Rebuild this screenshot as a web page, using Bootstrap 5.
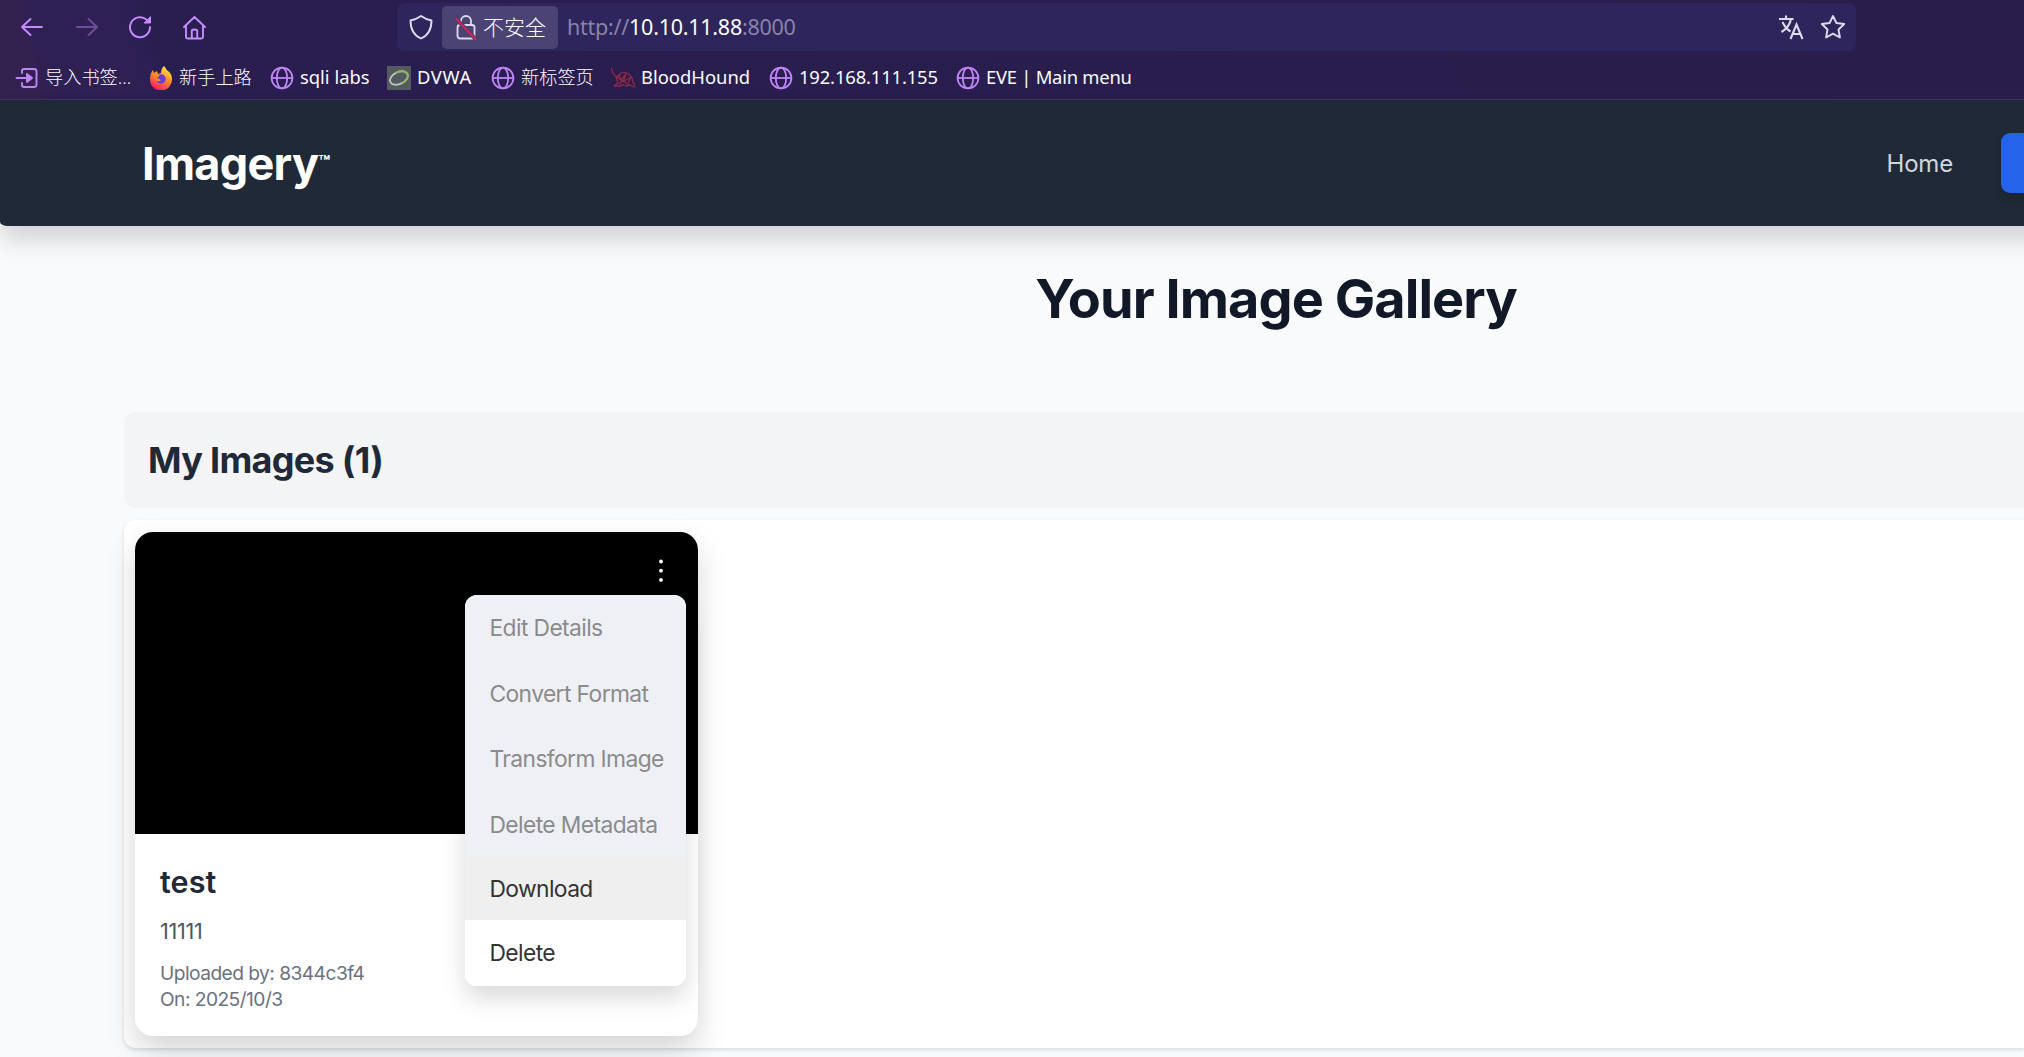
<!DOCTYPE html>
<html lang="zh-CN">
<head>
<meta charset="utf-8">
<meta name="viewport" content="width=device-width, initial-scale=1">
<title>Imagery</title>
<link href="https://cdn.jsdelivr.net/npm/bootstrap@5.3.0/dist/css/bootstrap.min.css" rel="stylesheet">
<style>
body{font-family:Inter,"Noto Sans CJK SC",sans-serif;background:#f9fafc;width:2024px;height:1057px;overflow:hidden}
svg{flex:none;display:block}
.chrome{height:100px;background:linear-gradient(75deg,#33214f 0,#33214f 35px,#2f2054 55px,#2e2055 140px,#2a1e50 165px,#291d4c 100%);border-bottom:1px solid #3b3068;font-family:"Noto Sans","Noto Sans CJK SC",sans-serif;color:#fbfbfe}
.toolbar{height:54px;padding-left:20px}
.tool-icons{width:377px;gap:28.500px}
.address{width:1459px;height:48px;border-radius:7px;background:#2d255b;padding:0 10px 0 12px}
.insecure{width:116px;height:43px;border-radius:5px;background:#4c4375;margin-left:9px;padding-left:13px;font-size:21px;font-weight:300;gap:6px;line-height:1}
.web-url{margin-left:9px;font-size:21.5px;color:#8b83a9;letter-spacing:-.25px}
.web-url b{font-weight:400;color:#fbfbfe}
.bookmarks{height:45px;padding:2px 0 0 15px;font-size:18.4px;line-height:1;white-space:nowrap}
.bm{gap:6px}
.bm svg{width:24px;height:24px}
.bm-dvwa{letter-spacing:.6px}
.bm-ip{letter-spacing:-.15px}
.bm-eve{letter-spacing:-.25px}
.zh{font-size:18.2px;font-weight:300}
.site-nav{height:126px;width:2064px;background:#1f2937;border-radius:0 0 0 8px/0 0 0 4px;box-shadow:0 15px 23px rgba(0,0,0,.15);padding:0 40px 0 142px;position:relative}
.brand{font-size:45px;font-weight:700;letter-spacing:-.7px;color:#fff;line-height:1}
.brand sup{font-size:19px;letter-spacing:0;top:-11px;vertical-align:baseline}
.nav-home{font-size:24px;color:#d1d5db;margin-left:auto;line-height:1;padding-top:2px;letter-spacing:-.2px}
.nav-login{width:23px;height:60px;background:#2563eb;border-radius:9px 0 0 9px;margin-left:48px;box-shadow:0 6px 9px rgba(0,0,0,.12)}
.page{padding-left:124px}
.page-title{font-size:54px;font-weight:700;line-height:60px;color:#111827;margin:43px 0 83px;padding-left:404px;letter-spacing:-.95px}
.group-head{height:96px;background:#f3f4f6;border-radius:12px 0 0 12px;padding:2px 0 0 24px;font-size:36px;font-weight:700;color:#1f2937;margin-bottom:12px;letter-spacing:-.7px}
.group-body{height:528px;background:#fff;border-radius:12px 0 0 12px;padding:12px 11px;box-shadow:0 2px 4px rgba(0,0,0,.12)}
.shot-card{width:563px;height:504px;border-radius:18px;background:#fff;position:relative;box-shadow:0 14px 30px rgba(0,0,0,.17)}
.shot{height:302px;background:#000;border-radius:18px 18px 0 0;padding:27px 35px}
.info{padding:30px 25px}
.info h3{font-size:30.500px;font-weight:600;line-height:36px;color:#1f2937;margin:0 0 15px;letter-spacing:.1px}
.info p{font-size:21.6px;line-height:32px;color:#4b5563;margin:0 0 14px;letter-spacing:-.3px}
.info div{font-size:19.2px;line-height:25.6px;color:#6b7280;letter-spacing:-.55px}
.actions{position:absolute;top:63px;right:12px;width:221px;height:391px;border-radius:12px;overflow:hidden;background:#fff;font-size:22.8px;color:#333}
.actions-shade{position:absolute;top:63px;right:12px;width:221px;height:391px;border-radius:12px;box-shadow:0 12px 24px rgba(0,0,0,.15)}
.act{height:65.5px;padding:1px 0 0 24.500px;white-space:nowrap;letter-spacing:-.6px}
.act.off{background:#eef0f6;color:#8b8b8b}
.act.hot{height:63px;background:#efefef}
</style>
</head>
<body>
<svg width="0" height="0" class="position-absolute"><defs>
<symbol id="globe" viewBox="0 0 24 24"><g fill="none" stroke="#bf85f7" stroke-width="1.8"><circle cx="12" cy="12" r="10.4"/><ellipse cx="12" cy="12" rx="5.2" ry="10.4"/><path d="M1.6 12h20.8"/></g></symbol>
</defs></svg>
<header class="chrome">
 <div class="toolbar d-flex align-items-center">
  <div class="tool-icons d-flex align-items-center">
   <svg width="25" height="24" viewBox="0 0 25 24" fill="none" stroke="#c68cff" stroke-width="1.9" stroke-linecap="round" stroke-linejoin="round"><path d="M22 12H2.5M10.500 4 2 12l8.500 8"/></svg>
   <svg width="25" height="24" viewBox="0 0 25 24" fill="none" stroke="#704b9b" stroke-width="1.9" stroke-linecap="round" stroke-linejoin="round"><path d="M3 12h19.500M14.500 4 23 12l-8.500 8"/></svg>
   <svg width="26" height="24" viewBox="0 0 26 24" fill="none" stroke="#c68cff" stroke-width="1.9" stroke-linecap="round"><path d="M19.500 4.600A10 10 0 1 0 23 12"/><path d="M23.500 2v6h-6z" fill="#c68cff" stroke-width="1" stroke-linejoin="round"/></svg>
   <svg width="25" height="25" viewBox="0 0 25 25" fill="none" stroke="#c68cff" stroke-width="1.9" stroke-linecap="round" stroke-linejoin="round"><path d="M2 12 12.500 2 23 12M4 10.500V22q0 1.500 1.500 1.500h14Q21 23.500 21 22V10.500M9.800 23v-7q0-1.500 2.700-1.500t2.700 1.500v7"/></svg>
  </div>
  <div class="address d-flex align-items-center">
   <svg width="24" height="26" viewBox="0 0 24 26" fill="none" stroke="#dedaf0" stroke-width="1.9" stroke-linejoin="round"><path d="M12 2Q17 5.500 22.500 6.500C22.500 15 19 21.500 12 24.500 5 21.500 1.500 15 1.500 6.500Q7 5.500 12 2z"/></svg>
   <div class="insecure d-flex align-items-center">
    <svg width="22" height="26" viewBox="0 0 22 26" fill="none" stroke="#dedaf0" stroke-width="1.800"><path d="M6 11V7a5 5 0 0 1 10 0v4"/><rect x="2.500" y="11" width="17" height="13.500" rx="2.500"/><path d="M.8 4.500 21 25.500" stroke="#4c4375" stroke-width="4"/><path d="M.8 4.500 21 25.500" stroke="#f01b46" stroke-width="1.800"/></svg>
    <span>不安全</span>
   </div>
   <div class="web-url">http://<b>10.10.11.88</b>:8000</div>
   <div class="ms-auto d-flex align-items-center gap-3">
    <svg width="26" height="26" viewBox="0 0 26 26" fill="none" stroke="#dedaf0" stroke-width="2.100"><path d="M1 5h14.500M8 1.500V5M3.500 18Q11.500 13 13 5M4.500 8q3 6.500 8 9.500M12.500 25l6-14.500L24.500 25M14.500 20h8"/></svg>
    <svg width="26" height="26" viewBox="0 0 26 26" fill="none" stroke="#dedaf0" stroke-width="1.900" stroke-linejoin="round"><path d="m13 2 3.400 7 7.800 1-5.700 5.500 1.400 8-6.900-3.800-6.900 3.800 1.400-8L1.800 10l7.800-1z"/></svg>
   </div>
  </div>
 </div>
 <nav class="bookmarks d-flex align-items-center">
  <div class="bm d-flex align-items-center" style="width:134px"><svg viewBox="0 0 24 24" fill="none" stroke="#bf85f7" stroke-width="1.900" stroke-linecap="round" stroke-linejoin="round"><path d="M7 7V5q0-2 2-2h10q2.500 0 2.500 2.500v13Q21.500 21 19 21H9q-2 0-2-2v-2M1.500 12H14"/><path d="m12 8 5 4-5 4z" fill="#bf85f7"/></svg><span class="zh">导入书签...</span></div>
  <div class="bm d-flex align-items-center" style="width:121px"><svg viewBox="0 0 24 24"><defs><linearGradient id="fx" x1=".8" y1="0" x2=".3" y2="1"><stop offset="0" stop-color="#fff44f"/><stop offset=".45" stop-color="#ff9226"/><stop offset="1" stop-color="#f5156c"/></linearGradient></defs><path d="M15 0c2 2 2 4 4 5 3 2 4 5 4 8a11 11 0 0 1-22 1C.8 10 2 6 4 4l1 3 3-2 1 3 3-1c0-3 1-5 3-7z" fill="url(#fx)"/><circle cx="12" cy="13" r="4.700" fill="#6c3bd8"/><path d="M4 8c3-1 5 0 7 1l-3 3 4 2c-3 3-7 0-8-6z" fill="#ff8a20"/></svg><span class="zh">新手上路</span></div>
  <div class="bm d-flex align-items-center" style="width:117px"><svg><use href="#globe"/></svg><span>sqli labs</span></div>
  <div class="bm d-flex align-items-center" style="width:104px"><svg viewBox="0 0 24 24" fill="none"><path d="M0 0h24v24H0z" fill="#535b60"/><g transform="rotate(-25 12 12)"><ellipse cx="12" cy="12" rx="9.500" ry="6" stroke="#bdc3c2" stroke-width="1.800"/><path d="M11 6c6-.5 10 2 10 6s-4 6-8 6" stroke="#91b83d" stroke-width="1.600"/></g></svg><span class="bm-dvwa">DVWA</span></div>
  <div class="bm d-flex align-items-center" style="width:120px"><svg><use href="#globe"/></svg><span class="zh">新标签页</span></div>
  <div class="bm d-flex align-items-center" style="width:158px"><svg viewBox="0 0 24 24" fill="none" stroke="#8f2944" stroke-width="1.300" stroke-linejoin="round"><path d="M0 2l2 5 2 3h3l3-3q7-2 11 5l1 5 2 1-1 3-4-2-4 1-3-1-4 1H3l4-3-2-6M8 8l2 6 5-6-3 8 8-5-3 6M6 11l5 4-3 3M11 14l7 5"/></svg><span>BloodHound</span></div>
  <div class="bm d-flex align-items-center" style="width:187px"><svg><use href="#globe"/></svg><span class="bm-ip">192.168.111.155</span></div>
  <div class="bm d-flex align-items-center"><svg><use href="#globe"/></svg><span class="bm-eve">EVE | Main menu</span></div>
 </nav>
</header>
<div class="site">
 <nav class="site-nav d-flex align-items-center">
  <div class="brand">Imagery<sup>™</sup></div>
  <span class="nav-home">Home</span>
  <div class="nav-login"></div>
 </nav>
 <main class="page">
  <h1 class="page-title text-center">Your Image Gallery</h1>
  <h2 class="group-head d-flex align-items-center">My Images (1)</h2>
  <section class="group-body">
   <article class="shot-card">
    <div class="shot d-flex justify-content-end"><svg width="4" height="24" viewBox="0 0 4 24" fill="#fff"><circle cx="2" cy="2.500" r="1.900"/><circle cx="2" cy="11.700" r="1.900"/><circle cx="2" cy="20.900" r="1.900"/></svg></div>
    <div class="info"><h3>test</h3><p>11111</p><div>Uploaded by: 8344c3f4<br>On: 2025/10/3</div></div>
    <div class="actions-shade"></div>
    <div class="actions">
     <div class="act off d-flex align-items-center">Edit Details</div>
     <div class="act off d-flex align-items-center">Convert Format</div>
     <div class="act off d-flex align-items-center">Transform Image</div>
     <div class="act off d-flex align-items-center">Delete Metadata</div>
     <div class="act hot d-flex align-items-center">Download</div>
     <div class="act d-flex align-items-center">Delete</div>
    </div>
   </article>
  </section>
 </main>
</div>
<script src="https://cdn.jsdelivr.net/npm/bootstrap@5.3.0/dist/js/bootstrap.bundle.min.js"></script>
</body>
</html>
